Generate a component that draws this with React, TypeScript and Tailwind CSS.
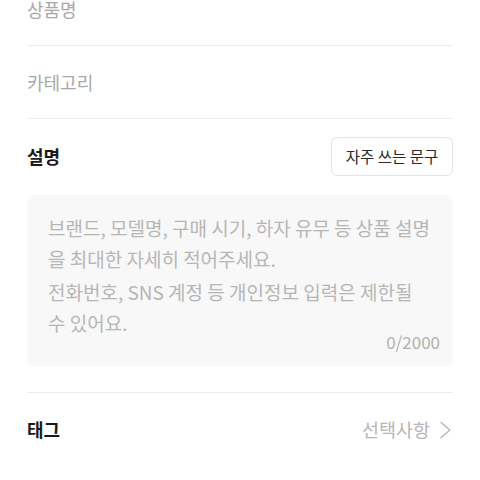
import React from "react";

export default function App() {
  const font = { fontFamily: '"Noto Sans CJK KR", "Noto Sans", sans-serif' };
  return (
    <div className="w-[480px] h-[480px] overflow-hidden bg-white" style={font}>
      <div className="mx-[27px] -mt-[27px]">
        <div className="h-[73px] flex items-center border-b border-[#ececec]">
          <span className="text-[18px] text-[#a8a8a8]">상품명</span>
        </div>
        <div className="h-[73px] flex items-center border-b border-[#ececec]">
          <span className="text-[18px] text-[#a8a8a8]">카테고리</span>
        </div>
        <div className="pt-[18px] pb-[26px] border-b border-[#ececec]">
          <div className="flex items-center justify-between">
            <span className="text-[18px] font-bold text-[#1a1a1a]">설명</span>
            <button className="h-[39px] w-[122px] rounded-[6px] border border-[#e3e3e3] bg-white text-[15.5px] text-[#2a2a2a] flex items-center justify-center">
              자주 쓰는 문구
            </button>
          </div>
          <div className="mt-[19px] h-[171px] rounded-[8px] bg-[#f8f8f8] pl-[21px] pr-[13px] pt-[17px] flex flex-col">
            <div className="text-[19px] leading-[31px] text-[#b6b6b6] whitespace-nowrap">
              <div>브랜드, 모델명, 구매 시기, 하자 유무 등 상품 설명</div>
              <div>을 최대한 자세히 적어주세요.</div>
              <div className="mt-[2px]">전화번호, SNS 계정 등 개인정보 입력은 제한될</div>
              <div>수 있어요.</div>
            </div>
            <div className="text-right text-[17px] leading-[20px] text-[#b0b0b0] -mt-[6px]">0/2000</div>
          </div>
        </div>
        <div className="h-[73px] flex items-center justify-between">
          <span className="text-[18px] font-bold text-[#1a1a1a]">태그</span>
          <div className="flex items-center gap-[9px]">
            <span className="text-[18.5px] text-[#b6b6b6]">선택사항</span>
            <svg width="14" height="18" viewBox="0 0 14 18" fill="none">
              <path d="M2 1.5 L11 9 L2 16.5" stroke="#b6b6b6" strokeWidth="1.4" strokeLinecap="round" strokeLinejoin="round" />
            </svg>
          </div>
        </div>
      </div>
    </div>
  );
}
